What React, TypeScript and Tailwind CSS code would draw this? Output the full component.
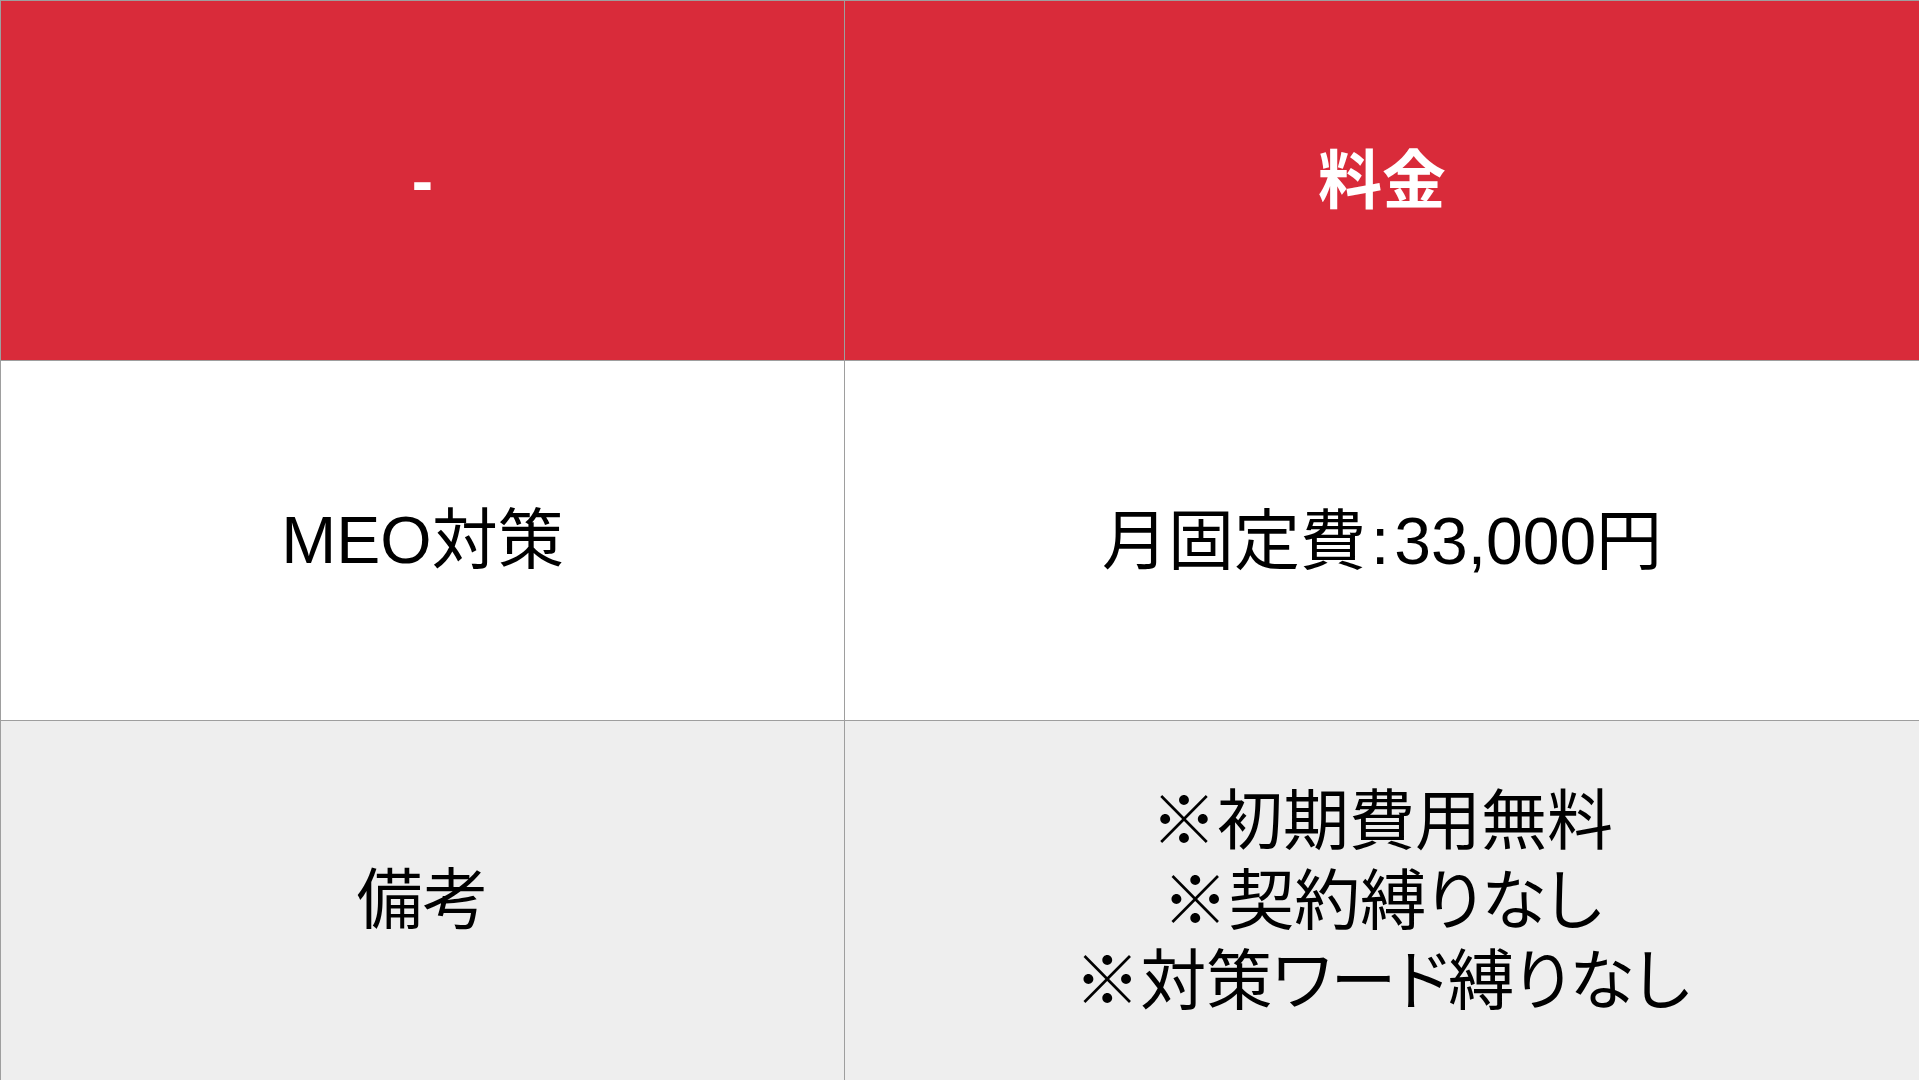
const rows = [
  {
    label: "MEO対策",
    value: [
      <>
        月固定費<span className="mx-[5px]">:</span>33,000円
      </>,
    ],
    bg: "bg-white",
  },
  {
    label: "備考",
    value: ["※初期費用無料", "※契約縛りなし", "※対策ワード縛りなし"],
    bg: "bg-[#eeeeee]",
  },
];

export default function App() {
  return (
    <main className="h-[1080px] w-full overflow-hidden bg-white font-['Liberation_Sans','Noto_Sans_CJK_JP',sans-serif] text-black">
      <div className="border-t border-l border-[#9e9e9e]">
        <div className="grid h-[360px] grid-cols-[844px_1fr] border-b border-[#9e9e9e] bg-[#d92b3a] text-[64px] font-bold text-white">
          <div className="flex items-center justify-center border-r border-[#9e9e9e]">
            -
          </div>
          <div className="flex items-center justify-center">料金</div>
        </div>

        {rows.map((row, i) => (
          <div
            key={row.label}
            className={`grid grid-cols-[844px_1fr] border-[#9e9e9e] text-[66px] ${row.bg} ${
              i === 0 ? "h-[360px] border-b" : "h-[359px]"
            }`}
          >
            <div className="flex items-center justify-center border-r border-[#9e9e9e]">
              {row.label}
            </div>
            <div className="flex flex-col items-center justify-center leading-[80px] [font-feature-settings:'palt']">
              {row.value.map((line, j) => (
                <p key={j}>{line}</p>
              ))}
            </div>
          </div>
        ))}
      </div>
    </main>
  );
}
